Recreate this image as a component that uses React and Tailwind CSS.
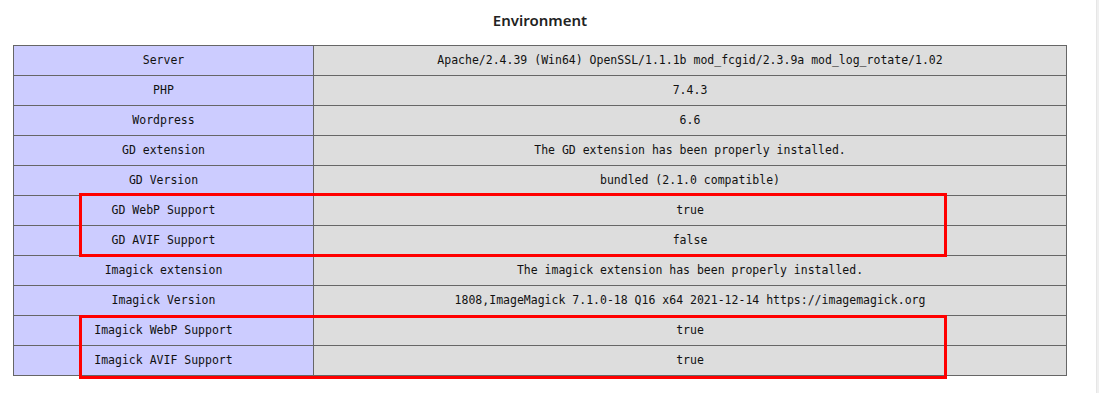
import React from "react";

const rows = [
  ["Server", "Apache/2.4.39 (Win64) OpenSSL/1.1.1b mod_fcgid/2.3.9a mod_log_rotate/1.02"],
  ["PHP", "7.4.3"],
  ["Wordpress", "6.6"],
  ["GD extension", "The GD extension has been properly installed."],
  ["GD Version", "bundled (2.1.0 compatible)"],
  ["GD WebP Support", "true"],
  ["GD AVIF Support", "false"],
  ["Imagick extension", "The imagick extension has been properly installed."],
  ["Imagick Version", "1808,ImageMagick 7.1.0-18 Q16 x64 2021-12-14 https://imagemagick.org"],
  ["Imagick WebP Support", "true"],
  ["Imagick AVIF Support", "true"],
];

export default function App() {
  return (
    <div className="flex w-[1099px] h-[393px] bg-white overflow-hidden">
      <div className="flex-1 flex flex-col">
        <div className="mt-[10px] h-[20px] w-[1054px] ml-[13px] text-center leading-[20px] text-[15px] font-semibold text-[#222] [font-family:'Noto_Sans',sans-serif]">
          Environment
        </div>
        <div className="relative mt-[15px] ml-[13px] w-[1054px]">
          <div className="grid grid-cols-[300px_753px] border-l border-t border-[#666] [font-family:'DejaVu_Sans_Mono',monospace] text-[11.5px] text-[#111]">
            {rows.map(([k, v]) => (
              <React.Fragment key={k}>
                <div className="h-[30px] flex items-center justify-center bg-[#ccccff] border-r border-b border-[#666] whitespace-nowrap">
                  {k}
                </div>
                <div className="h-[30px] flex items-center justify-center bg-[#dddddd] border-r border-b border-[#666] whitespace-nowrap">
                  {v}
                </div>
              </React.Fragment>
            ))}
          </div>
          <div className="absolute left-[66px] top-[148px] w-[868px] h-[64px] border-[3px] border-[#ff0000] pointer-events-none" />
          <div className="absolute left-[66px] top-[270px] w-[868px] h-[64px] border-[3px] border-[#ff0000] pointer-events-none" />
        </div>
      </div>
      <div className="w-[3px] h-full bg-[#f0f0f0] border-l border-[#e6e6e6]" />
    </div>
  );
}
